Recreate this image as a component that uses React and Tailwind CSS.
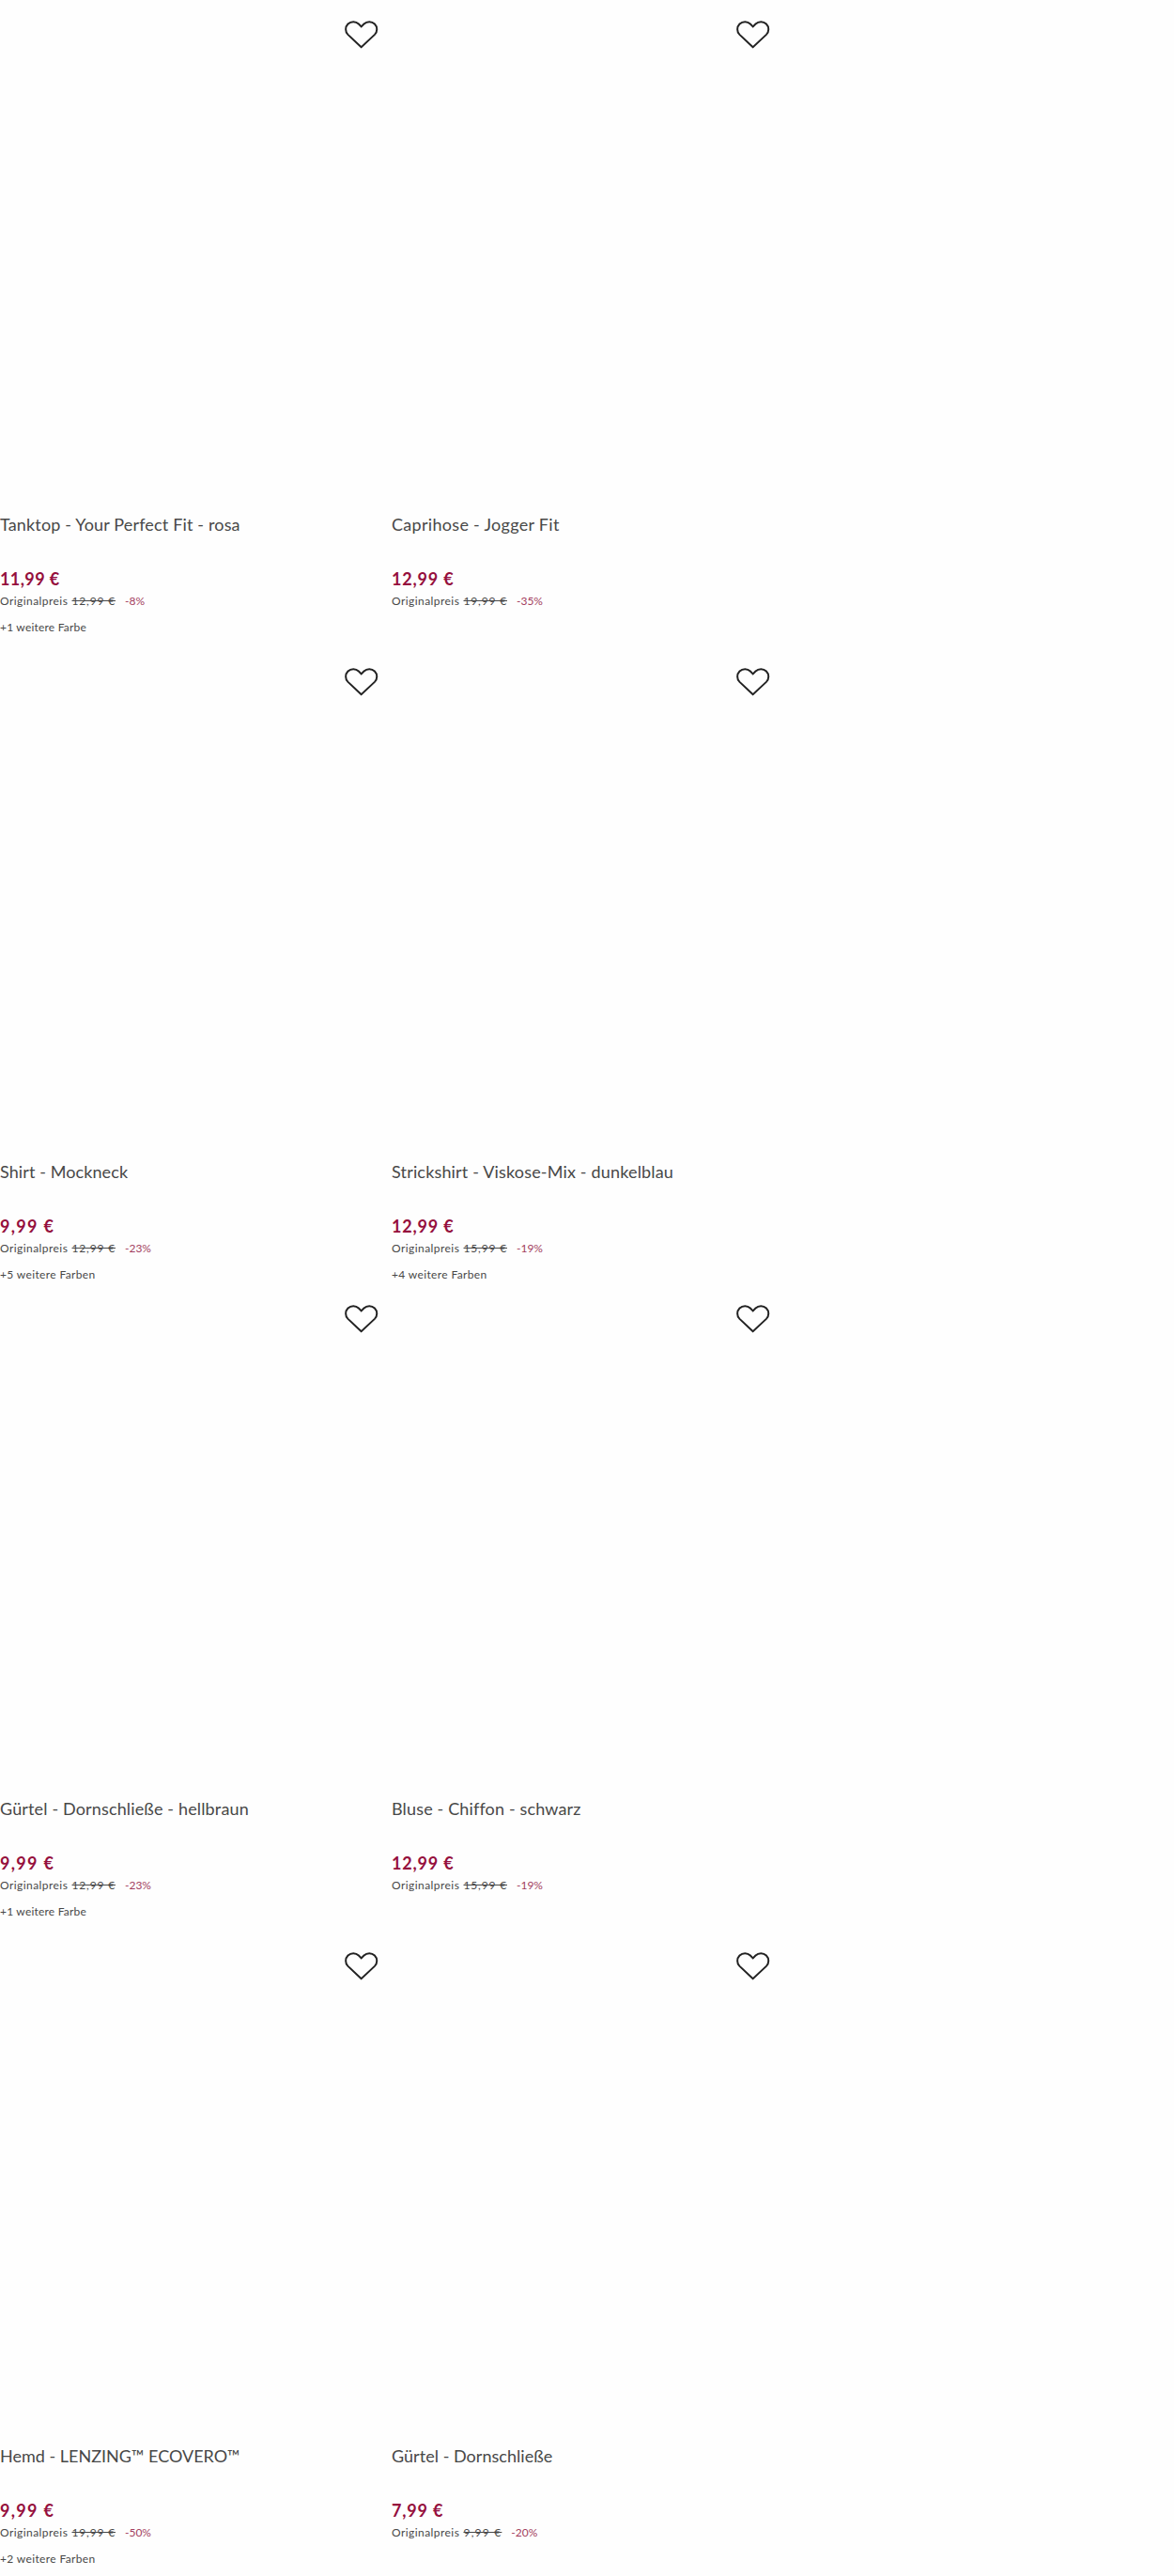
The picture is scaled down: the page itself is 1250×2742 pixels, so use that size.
const products = [
    { title: "Tanktop - Your Perfect Fit - rosa", titleClass: "tracking-[0.16px]", price: "11,99 €", priceClass: "tracking-[0.4px]", oldPrice: "12,99 €", oldClass: "tracking-[0.84px]", discount: "-8%", colors: "+1 weitere Farbe", colorsClass: "tracking-[0.2px]" },
    { title: "Caprihose - Jogger Fit", titleClass: "tracking-[0.3px]", price: "12,99 €", priceClass: "tracking-[0.8px]", oldPrice: "19,99 €", oldClass: "tracking-[0.84px]", discount: "-35%" },
    { title: "Shirt - Mockneck", titleClass: "tracking-[0.1px]", price: "9,99 €", priceClass: "tracking-[1.3px]", oldPrice: "12,99 €", oldClass: "tracking-[0.84px]", discount: "-23%", colors: "+5 weitere Farben", colorsClass: "tracking-[0.36px]" },
    { title: "Strickshirt - Viskose-Mix - dunkelblau", titleClass: "tracking-[0.17px]", price: "12,99 €", priceClass: "tracking-[0.8px]", oldPrice: "15,99 €", oldClass: "tracking-[0.84px]", discount: "-19%", colors: "+4 weitere Farben", colorsClass: "tracking-[0.36px]" },
    { title: "Gürtel - Dornschließe - hellbraun", titleClass: "tracking-[0.15px]", price: "9,99 €", priceClass: "tracking-[1.3px]", oldPrice: "12,99 €", oldClass: "tracking-[0.84px]", discount: "-23%", colors: "+1 weitere Farbe", colorsClass: "tracking-[0.2px]" },
    { title: "Bluse - Chiffon - schwarz", titleClass: "tracking-[0.15px]", price: "12,99 €", priceClass: "tracking-[0.8px]", oldPrice: "15,99 €", oldClass: "tracking-[0.84px]", discount: "-19%" },
    { title: "Hemd - LENZING™ ECOVERO™", titleClass: "tracking-normal", price: "9,99 €", priceClass: "tracking-[1.3px]", oldPrice: "19,99 €", oldClass: "tracking-[0.84px]", discount: "-50%", colors: "+2 weitere Farben", colorsClass: "tracking-[0.36px]" },
    { title: "Gürtel - Dornschließe", titleClass: "tracking-[0.04px]", price: "7,99 €", priceClass: "tracking-[0.8px]", oldPrice: "9,99 €", oldClass: "tracking-[1.2px]", discount: "-20%" },
];

function WishlistButton() {
    return (
        <button type="button" aria-label="Auf die Wunschliste" className="block h-[30px] w-9">
            <svg viewBox="0 0 36 30" fill="none" stroke="#222222" strokeWidth="2" className="h-[30px] w-9">
                <path d="M17.7 28.2 3.5 14.9A8 8 0 0 1 14.9 3.5L17.7 6.4 20.5 3.5A8 8 0 0 1 31.9 14.9Z" />
            </svg>
        </button>
    );
}

function ProductCard({ product }) {
    return (
        <article className="flex w-[403px] flex-col whitespace-nowrap">
            <div className="flex h-[546px] items-start justify-end pt-[21.5px]">
                <WishlistButton />
            </div>
            <h3 className="h-[58px] text-lg leading-6">
                <span className={product.titleClass}>{product.title}</span>
            </h3>
            <p className="h-[27px] text-lg leading-6 font-bold text-[#950f3d]">
                <span className={product.priceClass}>{product.price}</span>
            </p>
            <p className="flex h-7 text-xs leading-[18px]">
                <span className="w-[76.5px] tracking-[0.44px]">Originalpreis</span>
                <s className={product.oldClass}>{product.oldPrice}</s>
                <span className="ml-2.5 text-[#a33e60]">{product.discount}</span>
            </p>
            {product.colors && (
                <p className="text-xs leading-[18px]">
                    <span className={product.colorsClass}>{product.colors}</span>
                </p>
            )}
        </article>
    );
}

export default function App() {
    return (
        <main className="h-[2742px] overflow-hidden bg-[#fefefe] font-['Lato',sans-serif] text-[#484848]">
            <div className="grid w-[820px] grid-cols-[403px_403px] grid-rows-[689px_678px_689px_686px] gap-x-3.5">
                {products.map((product) => (
                    <ProductCard key={product.title} product={product} />
                ))}
            </div>
        </main>
    );
}
